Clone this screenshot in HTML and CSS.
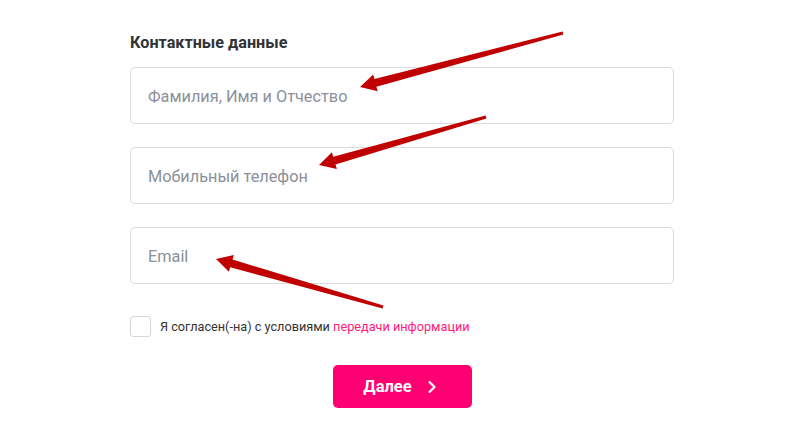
FILE: index.html
```html
<!DOCTYPE html>
<html lang="ru">
<head>
<meta charset="utf-8">
<link rel="stylesheet" href="styles.css">
</head>
<body>
<div class="page">
  <form class="form">
    <h2 class="title">Контактные данные</h2>
    <div class="fields">
      <div class="field">Фамилия, Имя и Отчество</div>
      <div class="field">Мобильный телефон</div>
      <div class="field">Email</div>
    </div>
    <label class="agree">
      <span class="check"></span>
      <span class="agree-text">Я согласен(-на) с условиями <a class="link">передачи информации</a></span>
    </label>
    <div class="actions">
      <button type="button" class="btn">Далее
        <svg class="chev" width="10" height="14" viewBox="0 0 10 14"><path d="M2.5 2 L7.5 7 L2.5 12" fill="none" stroke="#fff" stroke-width="2.2" stroke-linecap="round" stroke-linejoin="round"/></svg>
      </button>
    </div>
  </form>
  <svg class="arrows" width="800" height="443" viewBox="0 0 800 443">
    <g fill="#c00000">
      <polygon points="563.4,34.5 376.36,86.77 377.8,91.3 360,87 373.2,74.4 374.4,79.0 562.6,31.5"/>
      <polygon points="486.4,118.5 335.5,164.5 336.9,169.0 319,165 331.9,152.2 333.2,156.7 485.6,115.5"/>
      <polygon points="383.4,305.5 232.5,259.5 233.9,255.0 216,259 228.9,271.8 230.2,267.3 382.6,308.5"/>
    </g>
  </svg>
</div>
</body>
</html>
```

FILE: styles.css
```css
* { box-sizing: border-box; }
html, body { margin: 0; padding: 0; background: #fff; }
body { font-family: Roboto, "Noto Sans", "Liberation Sans", sans-serif; color: #333; }
.page { position: relative; width: 800px; height: 443px; overflow: hidden; }
.form { width: 544px; margin-left: 130px; padding-top: 33px; }
.title { margin: 0 0 14px; font-size: 16.2px; line-height: 20px; font-weight: 700; color: #2f3337; }
.fields { display: flex; flex-direction: column; gap: 23px; }
.field {
  height: 57px; border: 1px solid #dcdcdc; border-radius: 5px;
  display: flex; align-items: center; padding: 2px 0 0 17px;
  font-size: 16.3px; color: #8c909a;
}
.agree { display: flex; align-items: center; gap: 9px; margin-top: 32px; font-size: 12.7px; color: #333; }
.check { width: 21px; height: 21px; border: 1px solid #d6d6d6; border-radius: 3px; background: #fff; flex: none; }
.link { color: #ff1a7a; text-decoration: none; }
.actions { display: flex; justify-content: center; margin-top: 28px; }
.btn {
  width: 139px; height: 43px; border: 0; border-radius: 5px; background: #ff0072;
  color: #fff; font-family: inherit; font-size: 16.5px; font-weight: 700;
  display: flex; align-items: center; justify-content: center; gap: 15px; padding: 0 4px 0 0;
}
.chev { display: block; }
.arrows { position: absolute; left: 0; top: 0; pointer-events: none; }
```
